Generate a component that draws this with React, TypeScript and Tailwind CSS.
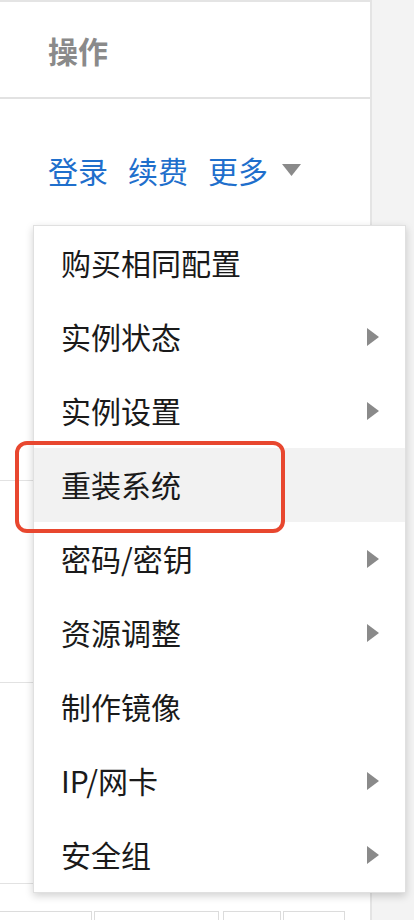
import { ReactNode } from "react"

const font = { fontFamily: '"Noto Sans CJK SC", "Noto Sans", sans-serif' }

const menuItems: { label: string; sub: boolean }[] = [
    { label: "购买相同配置", sub: false },
    { label: "实例状态", sub: true },
    { label: "实例设置", sub: true },
    { label: "重装系统", sub: false },
    { label: "密码/密钥", sub: true },
    { label: "资源调整", sub: true },
    { label: "制作镜像", sub: false },
    { label: "IP/网卡", sub: true },
    { label: "安全组", sub: true },
]

function RightArrow() {
    return (
        <svg width="12" height="18" viewBox="0 0 12 18" className="shrink-0">
            <path d="M0 0 L12 9 L0 18 Z" fill="#8a8a8a" />
        </svg>
    )
}

function Link({ children }: { children: ReactNode }) {
    return <span className="text-[#1f6fcc] mr-[20px]">{children}</span>
}

export default function App() {
    return (
        <div className="relative w-[414px] h-[920px] bg-[#f3f3f3] overflow-hidden" style={font}>

            {/* table */}
            <div className="w-[372px] h-full bg-white border-t-2 border-r-2 border-[#e4e4e4] flex flex-col">
                <div className="h-[97px] shrink-0 border-b-2 border-[#e2e2e2] flex items-center pl-[48px]">
                    <span className="text-[30px] font-bold text-[#8a8a8a] leading-none">操作</span>
                </div>

                <div className="h-[382px] shrink-0 border-b border-[#e2e2e2] pl-[48px] pt-[56px]">
                    <div className="flex items-center text-[30px] leading-none">
                        <Link>登录</Link>
                        <Link>续费</Link>
                        <span className="text-[#1f6fcc] mr-[14px]">更多</span>
                        <svg width="19" height="12" viewBox="0 0 19 12">
                            <path d="M0 0 L19 0 L9.5 12 Z" fill="#8a8a8a" />
                        </svg>
                    </div>
                </div>

                <div className="h-[202px] shrink-0 border-b border-[#e2e2e2]" />
                <div className="h-[201px] shrink-0 border-b border-[#e2e2e2]" />

                <div className="flex gap-[2px] pt-[27px]">
                    <div className="w-[92px] h-[20px] border-t border-r border-[#dcdcdc]" />
                    <div className="w-[125px] h-[20px] border border-b-0 border-[#dcdcdc]" />
                    <div className="w-[58px] h-[20px] ml-[2px] border border-b-0 border-[#dcdcdc]" />
                    <div className="w-[62px] h-[20px] border border-b-0 border-[#dcdcdc]" />
                </div>
            </div>

            {/* dropdown menu */}
            <div className="absolute left-[33px] top-[225px] w-[373px] bg-white border border-[#e0e0e0] shadow-[0_3px_8px_rgba(0,0,0,0.18)]">
                {menuItems.map((item, i) => (
                    <div
                        key={item.label}
                        className={`h-[74px] flex items-center justify-between pl-[27px] pr-[26px] text-[30px] text-[#1a1a1a] leading-none ${i === 3 ? "bg-[#f2f2f2]" : ""}`}
                    >
                        <span className="-mt-[2px]">{item.label}</span>
                        {item.sub && <RightArrow />}
                    </div>
                ))}
            </div>

            {/* highlight frame */}
            <div className="absolute left-[15px] top-[441px] w-[270px] h-[92px] border-[4px] border-[#e8472f] rounded-[12px]" />
        </div>
    )
}
